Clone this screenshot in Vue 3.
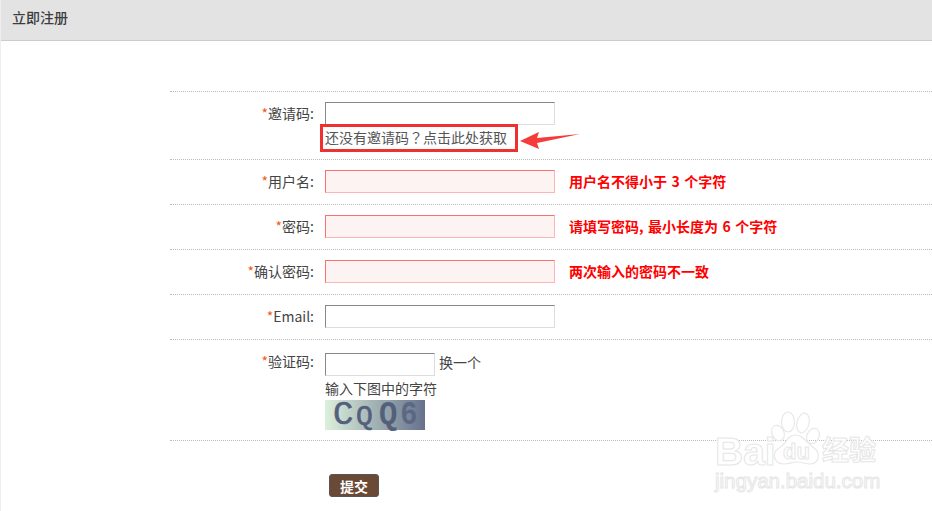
<script setup>
const rows = [
  { label: '用户名', error: '用户名不得小于 3 个字符' },
  { label: '密码', error: '请填写密码, 最小长度为 6 个字符' },
  { label: '确认密码', error: '两次输入的密码不一致' },
  { label: 'Email', error: '' },
]
</script>

<template>
  <div class="page">
    <header class="head">立即注册</header>
    <form class="form" @submit.prevent>
      <div class="row first">
        <label class="label"><i>*</i>邀请码:</label>
        <div class="field">
          <input class="input" />
          <a class="hint">还没有邀请码<span class="qm">？</span>点击此处获取</a>
        </div>
        <div class="mark"></div>
        <svg class="arrow" width="64" height="22" viewBox="0 0 64 22">
          <path d="M0 13 L19 4 L17 10 L60 6 L17 15 L19 21 Z" fill="#f63b3b" />
        </svg>
      </div>
      <div v-for="r in rows" :key="r.label" class="row">
        <label class="label"><i>*</i>{{ r.label }}:</label>
        <input class="input" :class="{ bad: r.error }" />
        <span v-if="r.error" class="error">{{ r.error }}</span>
      </div>
      <div class="row last">
        <label class="label"><i>*</i>验证码:</label>
        <div class="field low">
          <div class="code-line">
            <input class="input short" />
            <span class="swap">换一个</span>
          </div>
          <div class="tip">输入下图中的字符</div>
          <div class="captcha"><span class="c">C</span><span class="q">Q</span><span class="b">Q</span><span class="s">6</span></div>
        </div>
      </div>
      <div class="actions"><button class="submit">提交</button></div>
    </form>
    <div class="mark-wm">
      <svg class="paw" width="52" height="56" viewBox="0 0 52 56" fill="none" stroke="#e8e8e8" stroke-width="1.2">
        <ellipse cx="8" cy="23" rx="6" ry="8" transform="rotate(-25 8 23)" />
        <ellipse cx="18" cy="12" rx="6.5" ry="10" />
        <ellipse cx="33" cy="13" rx="6" ry="10" transform="rotate(15 33 13)" />
        <ellipse cx="43" cy="26" rx="6" ry="8" transform="rotate(25 43 26)" />
        <path d="M25 25 C17 25 17 34 9 38 C1 43 4 54 14 54 C20 54 22 52 27 52 C32 52 35 54 40 54 C49 54 51 43 44 38 C36 33 34 25 25 25 Z" fill="#fff" />
      </svg>
      <span class="wm-bai">Bai</span>
      <span class="wm-du">du</span>
      <span class="wm-cn">经验</span>
      <span class="wm-url">jingyan.baidu.com</span>
    </div>
  </div>
</template>

<style>
html, body { margin: 0; background: #fff; overflow: hidden; }
</style>

<style scoped>
.page {
  position: relative;
  width: 932px;
  height: 511px;
  box-sizing: border-box;
  border-left: 1px solid #eee;
  overflow: hidden;
  font: 14px/20px "Noto Sans CJK SC", "Noto Sans", sans-serif;
  color: #444;
}
.head {
  height: 40px;
  background: #e3e3e3;
  border-bottom: 1px solid #ccc;
  padding-left: 11px;
  line-height: 35px;
  font-weight: 500;
  color: #3d3d3d;
}
.form {
  margin: 50px 0 0 169px;
  border-top: 1px dotted #bbb;
}
.row {
  position: relative;
  display: flex;
  align-items: flex-start;
  height: 34px;
  padding: 10px 0 0;
  border-bottom: 1px dotted #bbb;
}
.first { height: 57px; }
.last { height: 90px; }
.label {
  width: 144px;
  flex: none;
  text-align: right;
  line-height: 23px;
  color: #444;
}
.label i { color: #f15a22; font-style: normal; }
.field { margin-left: 11px; display: flex; flex-direction: column; align-items: flex-start; }
.low { padding-top: 3px; }
.input {
  box-sizing: border-box;
  display: block;
  width: 230px;
  height: 23px;
  margin: 0;
  padding: 0 4px;
  background: #fff;
  border: 1px solid #ddd;
  border-top-color: #888;
  border-left-color: #888;
  border-radius: 0;
  outline: none;
}
.row > .input { margin-left: 11px; }
.input.bad {
  background: #fdf3f2;
  border-color: #fdb5b5;
  border-top-color: #f87070;
  border-left-color: #f87070;
}
.input.short { width: 110px; }
.hint { margin-top: 2px; line-height: 20px; color: #555; }
.qm { font-family: "Noto Sans CJK TC", sans-serif; }
.mark {
  position: absolute;
  left: 150px;
  top: 32px;
  width: 192px;
  height: 22px;
  border: 3px solid #ef3030;
}
.arrow { position: absolute; left: 350px; top: 36px; }
.error { margin-left: 14px; line-height: 22px; font-weight: 700; color: #f00; word-spacing: 1.3px; }
.code-line { display: flex; align-items: flex-start; }
.swap { margin-left: 4px; line-height: 19px; color: #444; }
.tip { margin-top: 2px; line-height: 20px; color: #444; }
.captcha {
  display: flex;
  align-items: center;
  box-sizing: border-box;
  width: 100px;
  height: 30px;
  padding-left: 8px;
  margin-top: 2px;
  background: linear-gradient(90deg, #dcf0dc, #a8b8b8 45%, #66728c);
  color: #53607c;
  font: 700 34px/30px "Liberation Mono", monospace;
}
.captcha span { display: block; flex: none; }
.captcha .c { width: 23px; font-weight: 400; -webkit-text-stroke: .6px #53607c; }
.captcha .q { width: 22px; font-size: 28px; font-weight: 400; transform: translateY(2px); -webkit-text-stroke: .6px #53607c; }
.captcha .b { width: 21px; transform: scaleX(.9); }
.captcha .s { width: 18px; color: #5b6883; transform: scaleX(.85); }
.actions { padding: 33px 0 0 159px; }
.submit {
  display: block;
  box-sizing: border-box;
  width: 50px;
  height: 23px;
  padding: 0;
  background: #6a4a36;
  border: 1px solid #5c5650;
  border-radius: 3px;
  color: #fff;
  font: 700 14px/20px "Noto Sans CJK SC", sans-serif;
}
.mark-wm {
  position: absolute;
  left: 714px;
  top: 410px;
  width: 170px;
  height: 90px;
  pointer-events: none;
}
.mark-wm span {
  position: absolute;
  color: #fff;
  -webkit-text-stroke: 1px #e6e6e6;
  font-family: "Liberation Sans", sans-serif;
  font-weight: 700;
  white-space: nowrap;
}
.paw { position: absolute; left: 55px; top: 0; }
.wm-bai { left: 0; top: 20px; font-size: 39px; line-height: 44px; }
.wm-du { left: 68px; top: 30px; font-size: 22px; line-height: 24px; }
.wm-cn { left: 107px; top: 22px; font-size: 27px; line-height: 34px; font-family: "Noto Sans CJK SC", sans-serif !important; }
.wm-url { left: 0; top: 58px; font-size: 20.5px; line-height: 26px; font-weight: 400 !important; }
</style>
